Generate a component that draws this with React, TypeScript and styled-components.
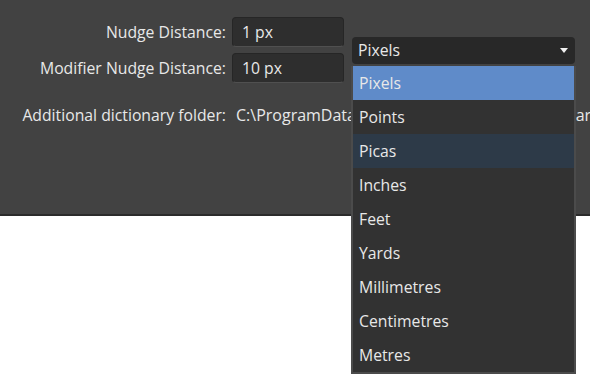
import React from "react";
import styled, { createGlobalStyle } from "styled-components";

const Global = createGlobalStyle`
  html, body { margin: 0; padding: 0; background: #ffffff; }
  body { font-family: "Open Sans", "Noto Sans", sans-serif; }
  * { box-sizing: border-box; }
`;

const Page = styled.div`
  width: 590px;
  height: 388px;
  overflow: hidden;
`;

const Panel = styled.div`
  position: relative;
  width: 590px;
  height: 216px;
  background: #424242;
  border-bottom: 2px solid #2b2b2b;
  padding: 17px 0 0 0;
  color: #e8e8e8;
  font-size: 15.75px;
`;

const Grid = styled.div`
  display: grid;
  grid-template-columns: 226px 112px 225px;
  grid-template-rows: 30px 30px;
  column-gap: 6px;
  row-gap: 6px;
  align-items: center;
`;

const Label = styled.div<{ $row?: number }>`
  grid-column: 1;
  grid-row: ${(p) => p.$row ?? "auto"};
  text-align: right;
  white-space: nowrap;
`;

const TextInput = styled.div<{ $row: number }>`
  grid-column: 2;
  grid-row: ${(p) => p.$row};
  height: 30px;
  background: #2e2e2e;
  border: 1px solid #262626;
  border-bottom: 1px solid #505050;
  border-radius: 4px;
  padding-left: 9px;
  display: flex;
  align-items: center;
`;

const SelectWrap = styled.div`
  grid-column: 3;
  grid-row: 1 / span 2;
  position: relative;
  align-self: center;
  margin-left: 2px;
  width: 223px;
`;

const Select = styled.div`
  height: 27px;
  background: #282828;
  border-radius: 4px;
  padding: 0 7px 0 6px;
  display: flex;
  align-items: center;
  justify-content: space-between;
`;

const Caret = styled.svg`
  width: 8px;
  height: 5px;
`;

const List = styled.ul`
  position: absolute;
  z-index: 2;
  left: -1px;
  top: 29px;
  width: 225px;
  margin: 0;
  padding: 0;
  list-style: none;
  background: #323232;
  border: 2px solid #4b4b4b;
  border-top: none;
`;

const Item = styled.li<{ $state?: "selected" | "hover" }>`
  height: 34px;
  display: flex;
  align-items: center;
  padding-left: 6px;
  background: ${(p) =>
    p.$state === "selected" ? "#5f8bc9" : p.$state === "hover" ? "#2d3a48" : "transparent"};
`;

const DictRow = styled.div`
  display: grid;
  grid-template-columns: 226px auto;
  column-gap: 10px;
  margin-top: 21px;
  white-space: nowrap;
`;

const Path = styled.div`
  white-space: nowrap;
  font-size: 16px;
`;

const units = [
  "Pixels",
  "Points",
  "Picas",
  "Inches",
  "Feet",
  "Yards",
  "Millimetres",
  "Centimetres",
  "Metres",
];

export default function App() {
  return (
    <Page>
      <Global />
      <Panel>
        <Grid>
          <Label $row={1}>Nudge Distance:</Label>
          <TextInput $row={1}>1 px</TextInput>
          <Label $row={2}>Modifier Nudge Distance:</Label>
          <TextInput $row={2}>10 px</TextInput>
          <SelectWrap>
            <Select>
              <span>Pixels</span>
              <Caret viewBox="0 0 8 5">
                <path d="M0 0 L8 0 L4 5 Z" fill="#f0f0f0" />
              </Caret>
            </Select>
            <List>
              {units.map((u, i) => (
                <Item key={u} $state={i === 0 ? "selected" : i === 2 ? "hover" : undefined}>
                  {u}
                </Item>
              ))}
            </List>
          </SelectWrap>
        </Grid>
        <DictRow>
          <Label>Additional dictionary folder:</Label>
          <Path>C:\ProgramData\Affinity\Common\1.0\Dictionaries</Path>
        </DictRow>
      </Panel>
    </Page>
  );
}
